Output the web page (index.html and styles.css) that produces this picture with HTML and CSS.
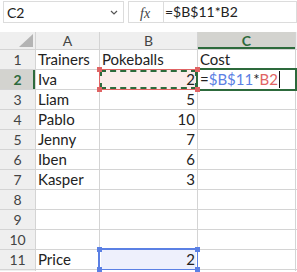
FILE: index.html
```html
<!DOCTYPE html>
<html>
<head>
    <title>Pokeballs</title>
    <link rel="stylesheet" href="styles.css">
</head>
<body>
    <div class="toolbar">
        <div class="namebox">
            <span>C2</span>
            <svg class="chev" width="8" height="5" viewBox="0 0 8 5"><path d="M1 1 L4 4 L7 1" fill="none" stroke="#555" stroke-width="1.2"/></svg>
        </div>
        <div class="fxbox"><span class="fx">fx</span></div>
        <div class="formula">=$B$11*B2</div>
    </div>

    <div class="sheet">
        <div class="hd corner"><span class="tri"></span></div>
        <div class="hd col">A</div>
        <div class="hd col">B</div>
        <div class="hd col active">C</div>
        <div class="hd col"></div>

        <div class="hd row">1</div>
        <div class="cell">Trainers</div>
        <div class="cell">Pokeballs</div>
        <div class="cell">Cost</div>
        <div class="cell"></div>

        <div class="hd row active">2</div>
        <div class="cell">Iva</div>
        <div class="cell num ref">2<i class="sq tl"></i><i class="sq bl"></i><i class="sq tr"></i><i class="sq br"></i></div>
        <div class="cell editing">=<span class="blue">$B$11</span>*<span class="red">B2</span><span class="caret"></span></div>
        <div class="cell"></div>

        <div class="hd row">3</div>
        <div class="cell">Liam</div>
        <div class="cell num">5</div>
        <div class="cell"></div>
        <div class="cell"></div>

        <div class="hd row">4</div>
        <div class="cell">Pablo</div>
        <div class="cell num">10</div>
        <div class="cell"></div>
        <div class="cell"></div>

        <div class="hd row">5</div>
        <div class="cell">Jenny</div>
        <div class="cell num">7</div>
        <div class="cell"></div>
        <div class="cell"></div>

        <div class="hd row">6</div>
        <div class="cell">Iben</div>
        <div class="cell num">6</div>
        <div class="cell"></div>
        <div class="cell"></div>

        <div class="hd row">7</div>
        <div class="cell">Kasper</div>
        <div class="cell num">3</div>
        <div class="cell"></div>
        <div class="cell"></div>

        <div class="hd row">8</div>
        <div class="cell"></div>
        <div class="cell"></div>
        <div class="cell"></div>
        <div class="cell"></div>

        <div class="hd row">9</div>
        <div class="cell"></div>
        <div class="cell"></div>
        <div class="cell"></div>
        <div class="cell"></div>

        <div class="hd row">10</div>
        <div class="cell"></div>
        <div class="cell"></div>
        <div class="cell"></div>
        <div class="cell"></div>

        <div class="hd row">11</div>
        <div class="cell">Price</div>
        <div class="cell num price">2<i class="sq tl"></i><i class="sq bl"></i><i class="sq tr"></i><i class="sq br"></i></div>
        <div class="cell"></div>
        <div class="cell"></div>

        <div class="hd row"></div>
        <div class="cell"></div>
        <div class="cell"></div>
        <div class="cell"></div>
        <div class="cell"></div>
    </div>
</body>
</html>
```

FILE: styles.css
```css
body {
    margin: 0;
    width: 297px;
    height: 272px;
    overflow: hidden;
    background: #fff;
    font-family: 'Lato', 'Liberation Sans', sans-serif;
    color: #222;
}

.toolbar {
    display: flex;
    height: 32px;
    padding: 1px 0 0 3px;
    box-sizing: border-box;
}

.namebox {
    width: 121px;
    height: 22px;
    border: 1px solid #dcdcdc;
    box-sizing: border-box;
    display: flex;
    align-items: center;
    justify-content: space-between;
    padding: 0 5px 0 3px;
    font-size: 14px;
}

.chev {
    margin-top: 1px;
}

.fxbox {
    margin-left: 4px;
    width: 35px;
    height: 22px;
    border: 1px solid #dcdcdc;
    border-right: none;
    box-sizing: border-box;
    padding-left: 11px;
}

.fx {
    font-family: 'Liberation Serif', serif;
    font-style: italic;
    font-size: 14px;
    color: #444;
    line-height: 20px;
}

.formula {
    flex: 1;
    height: 22px;
    border: 1px solid #dcdcdc;
    box-sizing: border-box;
    padding-left: 1px;
    font-size: 14px;
    line-height: 20px;
}

.sheet {
    display: grid;
    grid-template-columns: 35px 63px 97px 97px 10px;
    grid-template-rows: 17px repeat(11, 19px) 1px;
    gap: 1px;
    background: #d4d4d4;
}

.hd {
    background: #efefef;
    font-size: 14px;
    color: #444;
    display: flex;
    align-items: center;
    justify-content: center;
}

.hd.col.active {
    background: #d3d3cf;
    color: #2d6a3c;
    font-weight: bold;
    box-shadow: inset 0 -2px 0 #2d6a3c;
}

.hd.row.active {
    background: #d3d3cf;
    color: #2d6a3c;
    font-weight: bold;
    box-shadow: inset -2px 0 0 #2d6a3c;
}

.corner {
    position: relative;
}

.tri {
    position: absolute;
    right: 2px;
    bottom: 2px;
    width: 0;
    height: 0;
    border-left: 14px solid transparent;
    border-bottom: 13px solid #b4b4b4;
}

.cell {
    background: #fff;
    font-size: 15px;
    line-height: 19px;
    padding: 0 2px;
    white-space: nowrap;
    position: relative;
}

.cell.num {
    text-align: right;
}

.cell.ref {
    background: #fbecea;
    outline: 1px solid #e06464;
}

.cell.ref::after {
    content: "";
    position: absolute;
    inset: 0;
    border: 2px dashed #2d6a3c;
}

.cell.ref .sq {
    background: #e06464;
}

.cell.editing {
    outline: 2px solid #2d6a3c;
    z-index: 2;
}

.blue {
    color: #5b80e4;
}

.red {
    color: #e06464;
}

.caret {
    display: inline-block;
    width: 1px;
    height: 17px;
    background: #111;
    vertical-align: -3px;
    margin-left: 1px;
}

.cell.price {
    background: #eef0fc;
    outline: 2px solid #5b80e4;
}

.cell.price::after {
    content: "";
    position: absolute;
    inset: 0;
    border-left: 1px solid #fff;
    border-right: 1px solid #fff;
}

.cell.price .sq {
    background: #5b80e4;
}

.sq {
    position: absolute;
    width: 5px;
    height: 5px;
    z-index: 3;
}

.sq.tl { left: -3px; top: -3px; }
.sq.bl { left: -3px; bottom: -3px; }
.sq.tr { right: -3px; top: -3px; }
.sq.br { right: -3px; bottom: -3px; }
```
